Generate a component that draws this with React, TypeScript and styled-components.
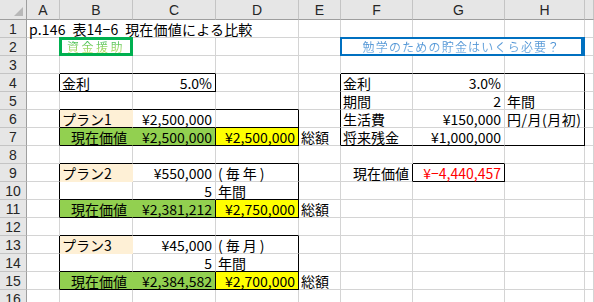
import { createGlobalStyle } from "styled-components";
import styled from "styled-components";

const GRID = "#d4d4d4";
const INK = "#000000";
const PEACH = "#fef0d6";
const GREEN = "#92d050";
const YELLOW = "#ffff00";

const COLS = ["A", "B", "C", "D", "E", "F", "G", "H", "I"];
const ROWS = 16;

type Align = "left" | "right";

type CellDef = {
  text?: string;
  align?: Align;
  fill?: string;
  color?: string;
  indent?: number;
  track?: number;
  span?: number;
  banner?: "green" | "blue";
};

const cells: Record<string, CellDef> = {
  A1: { text: "p.146  表14−6  現在価値による比較", span: 4, track: 0.2 },
  B2: { text: "資金援助", banner: "green" },
  F2: { text: "勉学のための貯金はいくら必要？", banner: "blue", span: 3 },

  B4: { text: "金利" },
  C4: { text: "5.0%", align: "right" },

  B6: { text: "プラン1", fill: PEACH },
  C6: { text: "¥2,500,000", align: "right" },
  B7: { text: "現在価値", fill: GREEN, indent: 11 },
  C7: { text: "¥2,500,000", align: "right", fill: GREEN },
  D7: { text: "¥2,500,000", align: "right", fill: YELLOW },
  E7: { text: "総額" },

  B9: { text: "プラン2", fill: PEACH },
  C9: { text: "¥550,000", align: "right" },
  D9: { text: "(毎年)", track: 3 },
  C10: { text: "5", align: "right" },
  D10: { text: "年間" },
  B11: { text: "現在価値", fill: GREEN, indent: 11 },
  C11: { text: "¥2,381,212", align: "right", fill: GREEN },
  D11: { text: "¥2,750,000", align: "right", fill: YELLOW },
  E11: { text: "総額" },

  B13: { text: "プラン3", fill: PEACH },
  C13: { text: "¥45,000", align: "right" },
  D13: { text: "(毎月)", track: 3 },
  C14: { text: "5", align: "right" },
  D14: { text: "年間" },
  B15: { text: "現在価値", fill: GREEN, indent: 11 },
  C15: { text: "¥2,384,582", align: "right", fill: GREEN },
  D15: { text: "¥2,700,000", align: "right", fill: YELLOW },
  E15: { text: "総額" },

  F4: { text: "金利" },
  G4: { text: "3.0%", align: "right" },
  F5: { text: "期間" },
  G5: { text: "2", align: "right" },
  H5: { text: "年間" },
  F6: { text: "生活費" },
  G6: { text: "¥150,000", align: "right" },
  H6: { text: "円/月(月初)", track: 0.5 },
  F7: { text: "将来残金" },
  G7: { text: "¥1,000,000", align: "right" },

  F9: { text: "現在価値", align: "right" },
  G9: { text: "¥−4,440,457", align: "right", color: "#ff0000" },
};

// thin black borders drawn round these ranges
const boxes = [
  "B4:C4",
  "B6:D7", "B7:C7", "D7:D7",
  "B9:D11", "B11:C11", "D11:D11",
  "B13:D15", "B15:C15", "D15:D15",
  "F4:H7",
  "G9:G9",
];

const parseRef = (ref: string) => ({
  c: COLS.indexOf(ref[0]),
  r: parseInt(ref.slice(1), 10),
});

const rightInk = new Set<string>();
const bottomInk = new Set<string>();

boxes.forEach((range) => {
  const [a, b] = range.split(":").map(parseRef);
  for (let r = a.r; r <= b.r; r++) {
    rightInk.add(`${b.c},${r}`);
    if (a.c > 0) rightInk.add(`${a.c - 1},${r}`);
  }
  for (let c = a.c; c <= b.c; c++) {
    bottomInk.add(`${c},${b.r}`);
    if (a.r > 1) bottomInk.add(`${c},${a.r - 1}`);
  }
});

const GlobalStyle = createGlobalStyle`
  html, body {
    margin: 0;
    padding: 0;
    background: #ffffff;
    overflow: hidden;
  }
`;

const Sheet = styled.div`
  display: grid;
  grid-template-columns: 27px 33px 73px 83px 83px 42px 72px 92px 80px 1fr;
  grid-template-rows: 20px repeat(${ROWS}, 18px);
  width: 594px;
  height: 302px;
  overflow: hidden;
  font-family: "Noto Sans CJK JP", "Noto Sans", sans-serif;
  font-size: 14px;
  color: #000;
`;

const Corner = styled.div`
  position: relative;
  box-sizing: border-box;
  background: #e6e6e6;
  border-right: 1px solid #9e9e9e;
  border-bottom: 1px solid #9e9e9e;

  &::after {
    content: "";
    position: absolute;
    right: 3px;
    bottom: 3px;
    border-style: solid;
    border-width: 0 0 9px 9px;
    border-color: transparent transparent #b8b8b8 transparent;
  }
`;

const Head = styled.div`
  box-sizing: border-box;
  background: #e6e6e6;
  font-family: "Liberation Sans", "DejaVu Sans", sans-serif;
  font-size: 14px;
  text-align: center;
  color: #262626;
`;

const ColHead = styled(Head)`
  border-right: 1px solid #c4c4c4;
  border-bottom: 1px solid #9e9e9e;
  line-height: 21px;
`;

const RowHead = styled(Head)`
  border-right: 1px solid #9e9e9e;
  border-bottom: 1px solid #c4c4c4;
  line-height: 18px;
`;

const Cell = styled.div<{
  $span: number;
  $align: Align;
  $fill: string;
  $color: string;
  $right: string;
  $bottom: string;
  $indent: number;
  $track: number;
}>`
  grid-column: span ${(p) => p.$span};
  box-sizing: border-box;
  min-width: 0;
  padding: 0 3px 0 ${(p) => p.$indent}px;
  background: ${(p) => p.$fill};
  border-right: 1px solid ${(p) => p.$right};
  border-bottom: 1px solid ${(p) => p.$bottom};
  color: ${(p) => p.$color};
  text-align: ${(p) => p.$align};
  letter-spacing: ${(p) => p.$track}px;
  line-height: 18px;
  white-space: pre;
  overflow: visible;
`;

const Banner = styled.div<{ $span: number; $tone: "green" | "blue" }>`
  grid-column: span ${(p) => p.$span};
  margin: -1px 0 0 -1px;
  box-sizing: border-box;
  display: flex;
  align-items: center;
  justify-content: center;
  border: ${(p) => (p.$tone === "green" ? "3px solid #00b050" : "2px solid #0070c0")};
  border-right-width: ${(p) => (p.$tone === "green" ? 3 : 4)}px;
  background: #ffffff;
`;

const BannerText = styled.span<{ $tone: "green" | "blue" }>`
  font-size: 12px;
  line-height: 14px;
  letter-spacing: ${(p) => (p.$tone === "green" ? 2.5 : 1.2)}px;
  background: ${(p) =>
    p.$tone === "green"
      ? "linear-gradient(180deg, #2fb857 0%, #8fd45e 55%, #c9e46e 100%)"
      : "linear-gradient(180deg, #3d88cf 0%, #86b8e6 100%)"};
  -webkit-background-clip: text;
  background-clip: text;
  color: transparent;
`;

function renderRow(r: number) {
  const out: JSX.Element[] = [<RowHead key={`h${r}`}>{r}</RowHead>];
  let c = 0;
  while (c < COLS.length) {
    const ref = `${COLS[c]}${r}`;
    const def = cells[ref] ?? {};
    const span = def.span ?? 1;
    const last = c + span - 1;
    if (def.banner) {
      out.push(
        <Banner key={ref} $span={span} $tone={def.banner}>
          <BannerText $tone={def.banner}>{def.text}</BannerText>
        </Banner>
      );
    } else {
      const line = def.fill ?? GRID;
      out.push(
        <Cell
          key={ref}
          $span={span}
          $align={def.align ?? "left"}
          $fill={def.fill ?? "transparent"}
          $color={def.color ?? "#000"}
          $right={rightInk.has(`${last},${r}`) ? INK : line}
          $bottom={bottomInk.has(`${c},${r}`) ? INK : line}
          $indent={def.indent ?? 2}
          $track={def.track ?? 0}
        >
          {def.text}
        </Cell>
      );
    }
    c += span;
  }
  return out;
}

export default function App() {
  return (
    <>
      <GlobalStyle />
      <Sheet>
        <Corner />
        {COLS.map((col) => (
          <ColHead key={col}>{col === "I" ? "" : col}</ColHead>
        ))}
        {Array.from({ length: ROWS }, (_, i) => renderRow(i + 1))}
      </Sheet>
    </>
  );
}
